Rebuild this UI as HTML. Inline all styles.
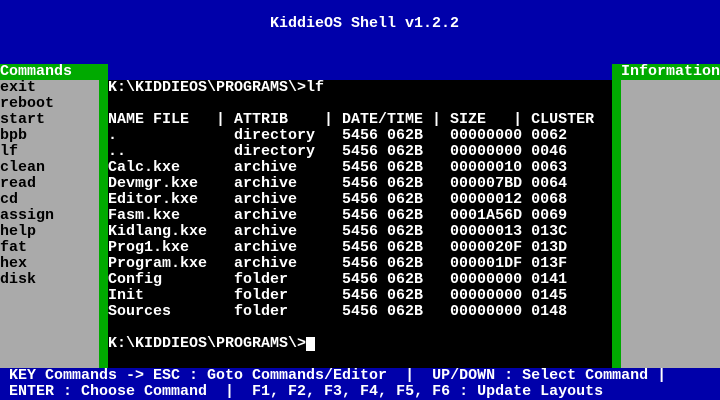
<!DOCTYPE html>
<html><head><style>
body{margin:0;width:720px;height:400px;overflow:hidden;background:#0000aa;position:relative;font-family:"Liberation Mono",monospace;font-size:15px;font-weight:bold}
div{position:absolute}
pre{margin:0;font:inherit;line-height:16px;white-space:pre;position:absolute}
</style></head><body>
<pre style="left:270px;top:16px;color:#fff">KiddieOS Shell v1.2.2</pre>
<div style="left:0;top:64px;width:108px;height:304px;background:#00aa00"></div>
<div style="left:0;top:80px;width:99px;height:288px;background:#aaa"></div>
<pre style="left:0;top:64px;color:#fff">Commands</pre>
<pre style="left:0;top:80px;color:#000">exit
reboot
start
bpb
lf
clean
read
cd
assign
help
fat
hex
disk</pre>
<div style="left:612px;top:64px;width:108px;height:304px;background:#00aa00"></div>
<div style="left:621px;top:80px;width:99px;height:288px;background:#aaa"></div>
<pre style="left:621px;top:64px;color:#fff">Information</pre>
<div style="left:108px;top:80px;width:504px;height:288px;background:#000"></div>
<pre style="left:108px;top:80px;color:#fff">K:\KIDDIEOS\PROGRAMS\>lf

NAME FILE   | ATTRIB    | DATE/TIME | SIZE   | CLUSTER
.             directory   5456 062B   00000000 0062
..            directory   5456 062B   00000000 0046
Calc.kxe      archive     5456 062B   00000010 0063
Devmgr.kxe    archive     5456 062B   000007BD 0064
Editor.kxe    archive     5456 062B   00000012 0068
Fasm.kxe      archive     5456 062B   0001A56D 0069
Kidlang.kxe   archive     5456 062B   00000013 013C
Prog1.kxe     archive     5456 062B   0000020F 013D
Program.kxe   archive     5456 062B   000001DF 013F
Config        folder      5456 062B   00000000 0141
Init          folder      5456 062B   00000000 0145
Sources       folder      5456 062B   00000000 0148

K:\KIDDIEOS\PROGRAMS\></pre>
<div style="left:306px;top:337px;width:9px;height:14px;background:#fff"></div>
<pre style="left:0;top:368px;color:#fff"> KEY Commands -> ESC : Goto Commands/Editor  |  UP/DOWN : Select Command |
 ENTER : Choose Command  |  F1, F2, F3, F4, F5, F6 : Update Layouts</pre>
</body></html>
